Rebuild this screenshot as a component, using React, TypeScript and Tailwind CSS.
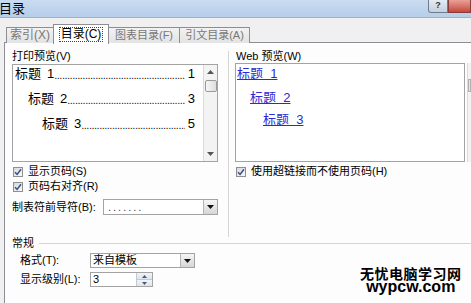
import React from 'react';

const FONT = "font-['Liberation_Sans','Noto_Sans_CJK_SC',sans-serif]";

function Check() {
  return (
    <span className="w-[10px] h-[10px] border border-[#8e8f8f] bg-gradient-to-br from-[#d8d8d8] to-[#fafafa] flex items-center justify-center shrink-0">
      <svg width="8" height="8" viewBox="0 0 8 8">
        <path d="M1 4.2 L3.1 6.4 L7 1.2" fill="none" stroke="#3b4f8c" strokeWidth="1.5" />
      </svg>
    </span>
  );
}

function DropBtn() {
  return (
    <span className="w-[14px] self-stretch border-l border-[#b5b5b5] bg-gradient-to-b from-[#f6f6f6] to-[#d6d6d6] flex items-center justify-center">
      <svg width="7" height="4" viewBox="0 0 7 4">
        <path d="M0 0 H7 L3.5 4 Z" fill="#111" />
      </svg>
    </span>
  );
}

function TocRow({ indent, num, page }: { indent: string; num: string; page: string }) {
  return (
    <div className={`h-[18px] min-w-0 flex items-center pr-[8px] ${indent}`}>
      <span className="whitespace-nowrap shrink-0">标题</span>
      <span className="ml-[6px] shrink-0 font-['Liberation_Sans']">{num}</span>
      <span className="w-0 flex-1 overflow-hidden whitespace-nowrap text-[11px] text-[#222] leading-[18px] pt-[1px] tracking-[-0.5px]">
        {'.'.repeat(90)}
      </span>
      <span className="ml-[3px] shrink-0 font-['Liberation_Sans']">{page}</span>
    </div>
  );
}

export default function App() {
  return (
    <div className={`w-[471px] h-[303px] overflow-hidden bg-[#f0f0f0] text-black relative ${FONT}`}>
      {/* title bar */}
      <div className="h-[18px] flex justify-between bg-gradient-to-b from-[#c9dcf1] to-[#b7cee9] border-b border-[#9fb2c8]">
        <span className="-ml-[1px] text-[13px] leading-[17px]">目录</span>
        <div className="flex items-start">
          <span className="w-[20px] h-[13px] border border-[#707c8a] border-t-0 rounded-bl-[3px] bg-gradient-to-b from-[#e4ebf3] to-[#c3d0de] text-[9px] leading-[11px] text-center text-[#333] font-bold">?</span>
          <span className="w-[23px] h-[13px] border border-[#8a3b3b] border-t-0 bg-gradient-to-b from-[#e7a198] to-[#c6453a]"></span>
        </div>
      </div>

      {/* tabs */}
      <div className="h-[25px] flex items-end pl-[6px] relative z-10 text-[12px]">
        <div className="w-[48px] h-[16px] border border-b-0 border-[#8c8e94] bg-gradient-to-b from-[#f2f2f2] to-[#e3e3e3] text-[#777] leading-[15px] text-center">索引(X)</div>
        <div className="w-[56px] h-[20px] -mb-[1px] -ml-[1px] border border-b-0 border-[#8c8e94] bg-white flex items-center justify-center">
          <span className="border border-dotted border-[#444] px-[1px] leading-[13px]">目录(C)</span>
        </div>
        <div className="w-[72px] h-[16px] -ml-[1px] border border-b-0 border-[#8c8e94] bg-gradient-to-b from-[#f2f2f2] to-[#e3e3e3] text-[#777] text-[11px] leading-[15px] text-center">图表目录(F)</div>
        <div className="w-[71px] h-[16px] -ml-[1px] border border-b-0 border-[#8c8e94] bg-gradient-to-b from-[#f2f2f2] to-[#e3e3e3] text-[#777] text-[11px] leading-[15px] text-center">引文目录(A)</div>
      </div>

      {/* tab page */}
      <div className="ml-[4px] -mt-[1px] h-[270px] border-t border-l border-[#8c8e94] bg-[#fdfdfd] text-[11px]">
        <div className="h-[194px] flex pl-[7px]">
          {/* left column */}
          <div className="w-[206px] flex flex-col">
            <div className="mt-[7px] h-[12px] leading-[12px]">打印预览(V)</div>
            <div className="mt-[2px] h-[98px] flex border border-[#a3a3a3] bg-white overflow-hidden">
              <div className="flex-1 min-w-0 flex flex-col gap-[7px] text-[13px]">
                <TocRow indent="pl-[2px]" num="1" page="1" />
                <TocRow indent="pl-[15px]" num="2" page="3" />
                <TocRow indent="pl-[29px]" num="3" page="5" />
              </div>
              <div className="w-[14px] shrink-0 border-l border-[#dadada] bg-[#f3f3f3] flex flex-col items-center">
                <svg className="mt-[5px]" width="7" height="4" viewBox="0 0 7 4">
                  <path d="M0 4 H7 L3.5 0 Z" fill="#555" />
                </svg>
                <div className="mt-[6px] w-[12px] h-[12px] border border-[#9a9a9a] rounded-[2px] bg-gradient-to-r from-[#f6f6f6] to-[#dedede]"></div>
                <div className="flex-1"></div>
                <svg className="mb-[5px]" width="7" height="4" viewBox="0 0 7 4">
                  <path d="M0 0 H7 L3.5 4 Z" fill="#555" />
                </svg>
              </div>
            </div>
            <div className="mt-[2px] h-[15px] flex items-center gap-[5px] pl-[1px]">
              <Check />
              <span>显示页码(S)</span>
            </div>
            <div className="h-[15px] flex items-center gap-[5px] pl-[1px]">
              <Check />
              <span>页码右对齐(R)</span>
            </div>
            <div className="mt-[5px] h-[16px] flex items-center">
              <span className="w-[91px]">制表符前导符(B):</span>
              <div className="flex-1 h-[16px] flex border border-[#a3a3a3] bg-white">
                <span className="flex-1 pl-[4px] tracking-[2px] leading-[14px] text-[#444]">.......</span>
                <DropBtn />
              </div>
            </div>
          </div>

          {/* separator */}
          <div className="ml-[10px] mt-[8px] w-px bg-[#d4d4d4]"></div>

          {/* right column */}
          <div className="ml-[6px] flex-1 flex flex-col">
            <div className="mt-[7px] h-[12px] leading-[12px] pl-[1px]">Web 预览(W)</div>
            <div className="mt-[1px] h-[99px] flex">
              <div className="w-[230px] border border-[#a3a3a3] bg-white flex flex-col text-[13px] text-[#2b2bd6]">
                <div className="h-[18px] pl-[1px] leading-[18px] mt-[1px]">
                  <span className="underline whitespace-pre">标题  1</span>
                </div>
                <div className="h-[18px] pl-[14px] leading-[18px] mt-[6px]">
                  <span className="underline whitespace-pre">标题  2</span>
                </div>
                <div className="h-[18px] pl-[27px] leading-[18px] mt-[4px]">
                  <span className="underline whitespace-pre">标题  3</span>
                </div>
              </div>
              <div className="ml-[2px] flex-1 border-l border-[#dadada] bg-[#f3f3f3] flex flex-col">
                <div className="mt-[16px] h-[13px] border border-[#b0b0b0] bg-[#e4e4e4]"></div>
              </div>
            </div>
            <div className="mt-[2px] h-[15px] flex items-center gap-[5px] pl-[1px]">
              <Check />
              <span>使用超链接而不使用页码(H)</span>
            </div>
          </div>
        </div>

        {/* general */}
        <div className="h-[12px] flex items-center pl-[7px]">
          <span>常规</span>
          <div className="ml-[5px] flex-1 h-px bg-[#d4d4d4]"></div>
        </div>
        <div className="mt-[4px] h-[15px] flex items-center pl-[15px]">
          <span className="w-[70px]">格式(T):</span>
          <div className="w-[105px] h-[15px] flex border border-[#a3a3a3] bg-white">
            <span className="flex-1 pl-[2px] leading-[13px]">来自模板</span>
            <DropBtn />
          </div>
        </div>
        <div className="mt-[4px] h-[15px] flex items-center pl-[15px]">
          <span className="w-[70px]">显示级别(L):</span>
          <div className="w-[63px] h-[15px] flex border border-[#a3a3a3] bg-white">
            <span className="flex-1 pl-[2px] leading-[13px] font-['Liberation_Sans']">3</span>
            <div className="w-[16px] flex flex-col border-l border-[#c3c9d3]">
              <span className="flex-1 flex items-center justify-center bg-gradient-to-b from-[#f1f4f8] to-[#dfe5ee] border-b border-[#c3c9d3]">
                <svg width="5" height="3" viewBox="0 0 5 3"><path d="M0 3 H5 L2.5 0 Z" fill="#4a5a78" /></svg>
              </span>
              <span className="flex-1 flex items-center justify-center bg-gradient-to-b from-[#f1f4f8] to-[#dfe5ee]">
                <svg width="5" height="3" viewBox="0 0 5 3"><path d="M0 0 H5 L2.5 3 Z" fill="#4a5a78" /></svg>
              </span>
            </div>
          </div>
        </div>
      </div>

      {/* watermark */}
      <div className="absolute left-[360px] top-[266px] flex flex-col items-center font-bold leading-none">
        <span className="text-[14px] tracking-[0.5px] font-['Noto_Sans_CJK_SC',sans-serif]">无忧电脑学习网</span>
        <span className="text-[16px] font-['Liberation_Sans',sans-serif] leading-[14px]">wypcw.com</span>
      </div>
    </div>
  );
}
